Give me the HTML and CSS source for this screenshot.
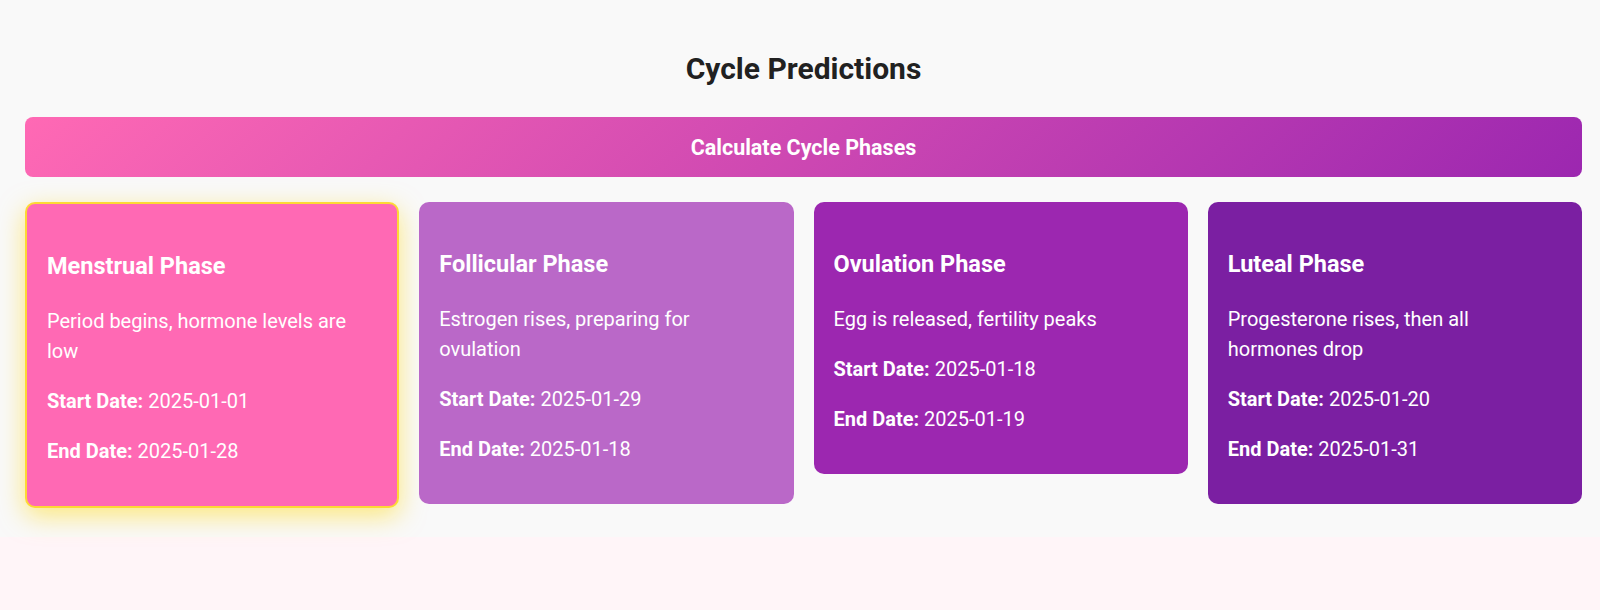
FILE: index.html
```html
<!DOCTYPE html>
<html lang="en">
<head>
<meta charset="UTF-8">
<title>Cycle Predictions</title>
<link rel="stylesheet" href="styles.css">
</head>
<body>
<section class="predictions">
  <h2 class="title">Cycle Predictions</h2>
  <button class="calc-btn" type="button">Calculate Cycle Phases</button>
  <div class="phases">
    <div class="phase menstrual active">
      <h3>Menstrual Phase</h3>
      <p>Period begins, hormone levels are low</p>
      <p><strong>Start Date:</strong> 2025-01-01</p>
      <p><strong>End Date:</strong> 2025-01-28</p>
    </div>
    <div class="phase follicular">
      <h3>Follicular Phase</h3>
      <p>Estrogen rises, preparing for ovulation</p>
      <p><strong>Start Date:</strong> 2025-01-29</p>
      <p><strong>End Date:</strong> 2025-01-18</p>
    </div>
    <div class="phase ovulation">
      <h3>Ovulation Phase</h3>
      <p>Egg is released, fertility peaks</p>
      <p><strong>Start Date:</strong> 2025-01-18</p>
      <p><strong>End Date:</strong> 2025-01-19</p>
    </div>
    <div class="phase luteal">
      <h3>Luteal Phase</h3>
      <p>Progesterone rises, then all hormones drop</p>
      <p><strong>Start Date:</strong> 2025-01-20</p>
      <p><strong>End Date:</strong> 2025-01-31</p>
    </div>
  </div>
</section>
</body>
</html>
```

FILE: styles.css
```css
* { box-sizing: border-box; }

html, body {
  margin: 0;
  padding: 0;
}

body {
  background: #fff5f8;
  font-family: Roboto, "Liberation Sans", Arial, sans-serif;
  color: #222;
  min-height: 610px;
}

.predictions {
  background: #f9f9f9;
  padding: 51px 18px 29px 25px;
}

.title {
  margin: 0 0 31px;
  text-align: center;
  font-size: 30px;
  font-weight: 700;
  line-height: 35px;
  color: #212121;
}

.calc-btn {
  display: block;
  width: 100%;
  height: 60px;
  border: none;
  border-radius: 8px;
  background: linear-gradient(135deg, #ff69b4, #9c27b0);
  color: #fff;
  font-family: Roboto, "Liberation Sans", Arial, sans-serif;
  font-size: 21.5px;
  font-weight: 700;
  cursor: pointer;
  margin: 0 0 25px;
}

.phases {
  display: grid;
  grid-template-columns: repeat(4, 1fr);
  gap: 20px;
  align-items: start;
}

.phase {
  border-radius: 10px;
  padding: 20px;
  color: #fff;
  line-height: 30px;
  font-size: 20px;
}

.phase h3 {
  font-size: 23.5px;
  font-weight: 700;
  margin: 24px 0 22px;
  line-height: 36px;
}

.phase p {
  margin: 20px 0;
}

.phase strong { font-weight: 700; }

.menstrual { background: #ff69b4; }
.follicular { background: #ba68c8; }
.ovulation { background: #9c27b0; }
.luteal { background: #7b1fa2; }

.phase.active {
  border: 2px solid #fdd835;
  box-shadow: 0 8px 26px rgba(255, 215, 0, 0.5);
}
```
